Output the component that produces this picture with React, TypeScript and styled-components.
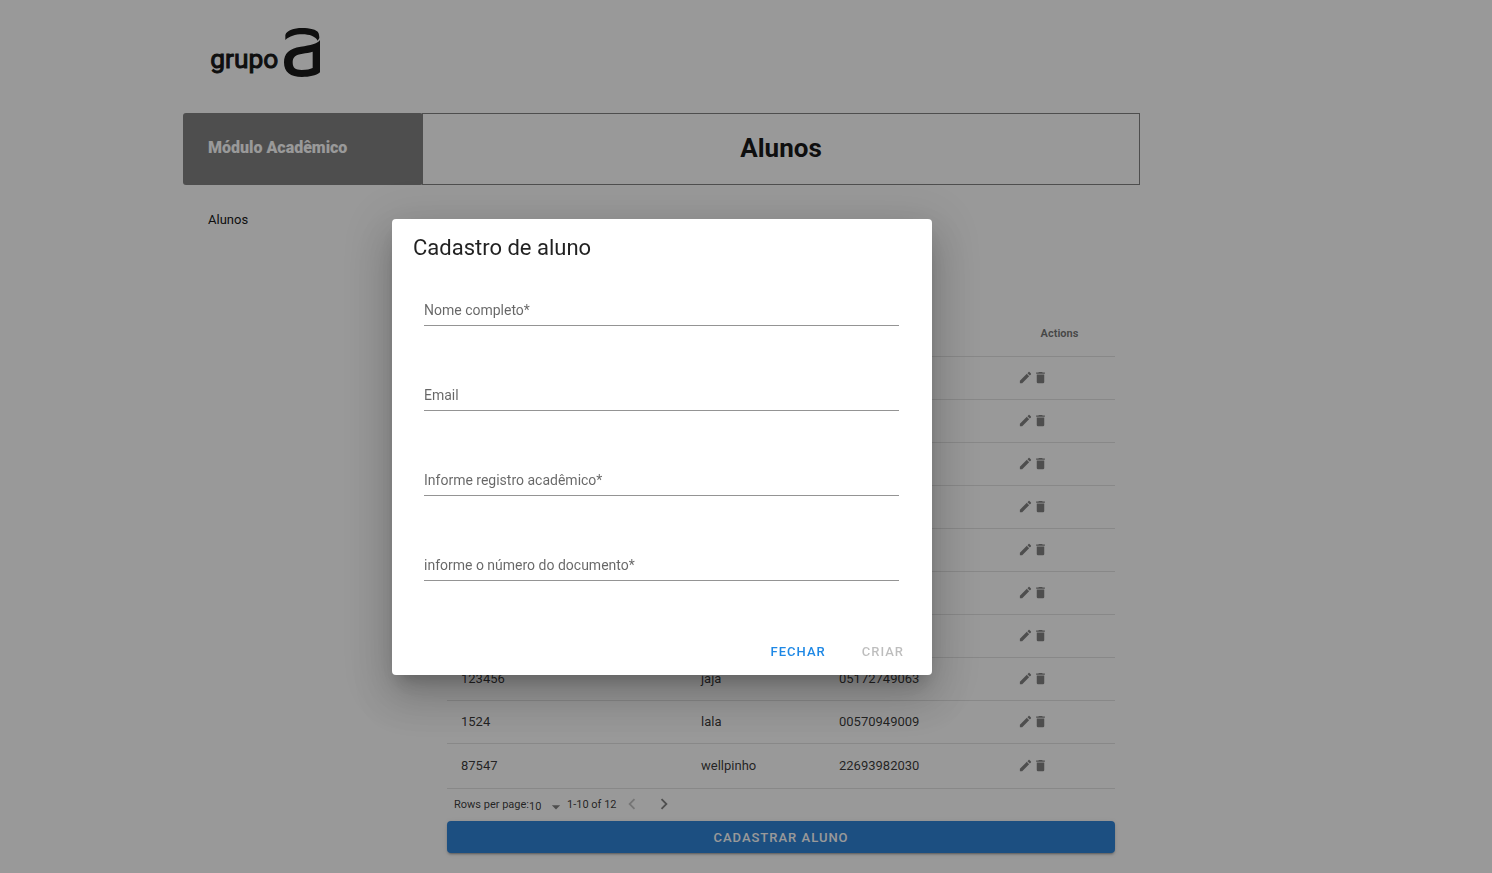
import React from 'react';
import styled, { createGlobalStyle } from 'styled-components';

const GlobalStyle = createGlobalStyle`
  *, *::before, *::after { box-sizing: border-box; }
  body {
    margin: 0;
    background: #fff;
    color: #000;
    font-family: Roboto, "Liberation Sans", sans-serif;
    font-size: 13px;
    line-height: 20px;
  }
  button, input, select { font: inherit; color: inherit; }
  h1, h2 { margin: 0; }
`;

const Page = styled.div`
  padding-right: 169px;
`;

const Container = styled.div`
  max-width: 957px;
  margin: 0 auto;
  padding-bottom: 20px;
`;

const Header = styled.header`
  height: 113px;
  padding: 26px 27px 0;
`;

const Logo = styled.svg`
  display: block;
  width: 112px;
  height: 52px;
`;

const Columns = styled.div`
  display: flex;
`;

const Sidebar = styled.aside`
  flex: 0 0 240px;
`;

const ModuleTitle = styled.h2`
  display: flex;
  align-items: center;
  height: 72px;
  padding: 0 25px 2px;
  border-radius: 3px;
  background: #757575;
  color: #fff;
  font-size: 16px;
  font-weight: 900;
`;

const MenuLink = styled.a`
  display: block;
  padding: 25px;
  color: inherit;
  text-decoration: none;
`;

const Main = styled.main`
  flex: 1;
  min-width: 0;
`;

const PageTitle = styled.h1`
  display: flex;
  align-items: center;
  justify-content: center;
  height: 72px;
  margin-left: -1px;
  padding-bottom: 2px;
  border: 1px solid #757575;
  font-size: 26px;
  font-weight: 700;
`;

const Content = styled.section`
  padding: 126px 25px 0 24px;
`;

const Table = styled.table`
  width: 100%;
  table-layout: fixed;
  border-collapse: separate;
  border-spacing: 0;
  color: rgba(0, 0, 0, 0.87);
`;

const Column = styled.col<{ $width?: number }>`
  width: ${({ $width }) => ($width ? `${$width}px` : 'auto')};
`;

const HeadCell = styled.th`
  height: 46px;
  padding: 0 14px;
  border-bottom: 1px solid rgba(0, 0, 0, 0.12);
  color: rgba(0, 0, 0, 0.6);
  font-size: 11px;
  font-weight: 700;
  text-align: center;
`;

const Cell = styled.td`
  height: 43px;
  padding: 0 14px;
  border-bottom: 1px solid rgba(0, 0, 0, 0.12);

  tr:last-child > & {
    height: 44px;
    border-bottom: 0;
  }
`;

const Actions = styled.div`
  display: flex;
  padding-bottom: 2px;
`;

const IconButton = styled.button<{ $size: number; $muted?: boolean }>`
  display: flex;
  padding: 0;
  border: 0;
  background: none;
  color: ${({ $muted }) => ($muted ? 'rgba(0, 0, 0, 0.26)' : 'rgba(0, 0, 0, 0.54)')};
  cursor: pointer;

  svg {
    width: ${({ $size }) => $size}px;
    height: ${({ $size }) => $size}px;
  }
`;

const TableFooter = styled.div`
  display: flex;
  align-items: center;
  height: 33px;
  padding: 0 7px;
  border-top: 1px solid rgba(0, 0, 0, 0.12);
  color: rgba(0, 0, 0, 0.87);
  font-size: 11px;
`;

const SelectWrap = styled.span`
  display: flex;
  align-items: center;
  padding-top: 3px;
  margin-right: 1px;

  svg {
    width: 20px;
    height: 20px;
    margin-left: -20px;
    color: rgba(0, 0, 0, 0.54);
    pointer-events: none;
  }
`;

const PageSize = styled.select`
  width: 37px;
  padding: 0;
  border: 0;
  background: none;
  appearance: none;
`;

const Pager = styled.nav`
  display: flex;
  gap: 10px;
  margin-left: 4px;
  padding-bottom: 2px;
`;

const PrimaryButton = styled.button`
  display: block;
  width: 100%;
  height: 32px;
  padding: 2px 0 0;
  border: 0;
  border-radius: 4px;
  background: #1976d2;
  color: #fff;
  font-size: 13px;
  font-weight: 500;
  letter-spacing: 1px;
  text-transform: uppercase;
  box-shadow: 0 3px 1px -2px rgba(0, 0, 0, 0.2), 0 2px 2px 0 rgba(0, 0, 0, 0.14),
    0 1px 5px 0 rgba(0, 0, 0, 0.12);
`;

const Overlay = styled.div`
  position: fixed;
  inset: 0;
  display: flex;
  align-items: center;
  justify-content: center;
  padding: 21px 168px 0 0;
  background: rgba(33, 33, 33, 0.46);
`;

const Dialog = styled.form`
  width: 100%;
  max-width: 540px;
  border-radius: 4px;
  background: #fff;
  box-shadow: 0 11px 15px -7px rgba(0, 0, 0, 0.2), 0 24px 38px 3px rgba(0, 0, 0, 0.14),
    0 9px 46px 8px rgba(0, 0, 0, 0.12);
`;

const DialogTitle = styled.h2`
  padding: 15px 21px 0;
  color: rgba(0, 0, 0, 0.87);
  font-size: 22px;
  font-weight: 400;
  line-height: 28px;
`;

const Fields = styled.div`
  display: flex;
  flex-direction: column;
  gap: 56px;
  padding: 35px 33px 0 32px;
`;

const Field = styled.div`
  display: grid;
  height: 29px;
  border-bottom: 1px solid rgba(0, 0, 0, 0.42);
`;

const FieldLabel = styled.label`
  grid-area: 1 / 1;
  padding-top: 3px;
  color: rgba(0, 0, 0, 0.6);
  font-size: 14px;
  pointer-events: none;
`;

const FieldInput = styled.input`
  grid-area: 1 / 1;
  width: 100%;
  min-width: 0;
  padding: 0;
  border: 0;
  outline: 0;
  background: none;
  font-size: 14px;
`;

const DialogActions = styled.div`
  display: flex;
  justify-content: flex-end;
  gap: 8px;
  padding: 55px 14px 7px;
`;

const TextButton = styled.button`
  height: 32px;
  padding: 0 14px;
  border: 0;
  background: none;
  color: #1e88e5;
  font-size: 13px;
  font-weight: 500;
  letter-spacing: 1px;
  text-transform: uppercase;

  &:disabled {
    color: rgba(0, 0, 0, 0.26);
  }
`;

const icons = {
  pencil:
    'M20.71,7.04C21.1,6.65 21.1,6 20.71,5.63L18.37,3.29C18,2.9 17.35,2.9 16.96,3.29L15.12,5.12L18.87,8.87M3,17.25V21H6.75L17.81,9.93L14.06,6.18L3,17.25Z',
  trash:
    'M19,4H15.5L14.5,3H9.5L8.5,4H5V6H19M6,19A2,2 0 0,0 8,21H16A2,2 0 0,0 18,19V7H6V19Z',
  left: 'M15.41,16.58L10.83,12L15.41,7.41L14,6L8,12L14,18L15.41,16.58Z',
  right: 'M8.59,16.58L13.17,12L8.59,7.41L10,6L16,12L10,18L8.59,16.58Z',
  down: 'M7,10L12,15L17,10H7Z',
};

const Icon = ({ name }: { name: keyof typeof icons }) => (
  <svg viewBox="0 0 24 24" fill="currentColor" aria-hidden="true">
    <path d={icons[name]} />
  </svg>
);

const BrandLogo = () => (
  <Logo viewBox="90 48 336 156" role="img" aria-label="grupo a">
    <text
      x="91"
      y="175"
      fontFamily="Roboto, sans-serif"
      fontSize="79"
      stroke="#000"
      strokeWidth="3"
    >
      grupo
    </text>
    <path d="M316 90V75C320 61 342 54 366 54C390 54 410 59 415 68C417 72 418 78 418 84L413 92C406 79 388 73 367 73C345 73 329 79 316 90Z" />
    <path
      fillRule="evenodd"
      d="M420 90V187C408 197 388 201 366 201C331 201 312 187 312 157C312 131 327 115 362 110C392 106 411 102 420 90ZM398 125C387 129 379 129 368 131C346 134 338 142 338 157C338 174 346 180 365 180C380 180 390 178 398 174Z"
    />
  </Logo>
);

type Student = { ra?: string; name?: string; document?: string };

const students: Student[] = [
  {},
  {},
  {},
  {},
  {},
  {},
  {},
  { ra: '123456', name: 'jaja', document: '05172749063' },
  { ra: '1524', name: 'lala', document: '00570949009' },
  { ra: '87547', name: 'wellpinho', document: '22693982030' },
];

const fields = [
  { id: 'name', label: 'Nome completo*' },
  { id: 'email', label: 'Email' },
  { id: 'ra', label: 'Informe registro acadêmico*' },
  { id: 'document', label: 'informe o número do documento*' },
];

export default function App() {
  return (
    <>
      <GlobalStyle />
      <Page>
        <Container>
          <Header>
            <BrandLogo />
          </Header>
          <Columns>
            <Sidebar>
              <ModuleTitle>Módulo Acadêmico</ModuleTitle>
              <MenuLink href="#alunos">Alunos</MenuLink>
            </Sidebar>
            <Main>
              <PageTitle>Alunos</PageTitle>
              <Content>
                <Table>
                  <colgroup>
                    <Column />
                    <Column $width={138} />
                    <Column $width={179} />
                    <Column $width={111} />
                  </colgroup>
                  <thead>
                    <tr>
                      <HeadCell />
                      <HeadCell />
                      <HeadCell />
                      <HeadCell scope="col">Actions</HeadCell>
                    </tr>
                  </thead>
                  <tbody>
                    {students.map((student, index) => (
                      <tr key={index}>
                        <Cell>{student.ra}</Cell>
                        <Cell>{student.name}</Cell>
                        <Cell>{student.document}</Cell>
                        <Cell>
                          <Actions>
                            <IconButton type="button" $size={15} aria-label="Editar">
                              <Icon name="pencil" />
                            </IconButton>
                            <IconButton type="button" $size={15} aria-label="Excluir">
                              <Icon name="trash" />
                            </IconButton>
                          </Actions>
                        </Cell>
                      </tr>
                    ))}
                  </tbody>
                </Table>
                <TableFooter>
                  <label htmlFor="page-size">Rows per page:</label>
                  <SelectWrap>
                    <PageSize id="page-size" defaultValue="10">
                      <option value="10">10</option>
                    </PageSize>
                    <Icon name="down" />
                  </SelectWrap>
                  <span>1-10 of 12</span>
                  <Pager>
                    <IconButton type="button" $size={22} $muted disabled aria-label="Anterior">
                      <Icon name="left" />
                    </IconButton>
                    <IconButton type="button" $size={22} aria-label="Próxima">
                      <Icon name="right" />
                    </IconButton>
                  </Pager>
                </TableFooter>
                <PrimaryButton type="button">Cadastrar aluno</PrimaryButton>
              </Content>
            </Main>
          </Columns>
        </Container>
      </Page>
      <Overlay>
        <Dialog role="dialog" aria-modal="true" aria-labelledby="dialog-title">
          <DialogTitle id="dialog-title">Cadastro de aluno</DialogTitle>
          <Fields>
            {fields.map(({ id, label }) => (
              <Field key={id}>
                <FieldInput id={id} type="text" />
                <FieldLabel htmlFor={id}>{label}</FieldLabel>
              </Field>
            ))}
          </Fields>
          <DialogActions>
            <TextButton type="button">Fechar</TextButton>
            <TextButton type="submit" disabled>
              Criar
            </TextButton>
          </DialogActions>
        </Dialog>
      </Overlay>
    </>
  );
}
